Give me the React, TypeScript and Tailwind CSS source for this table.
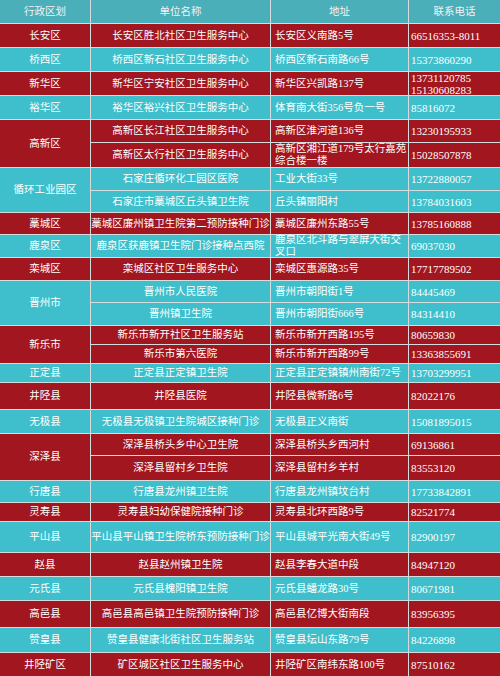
import type { ReactNode } from "react";

type Unit = { name: string; addr: ReactNode; phone: ReactNode };
type Group = { area: string; units: Unit[] };

const groups: Group[] = [
  { area: "长安区", units: [{ name: "长安区胜北社区卫生服务中心", addr: "长安区义南路5号", phone: "66516353-8011" }] },
  { area: "桥西区", units: [{ name: "桥西区新石社区卫生服务中心", addr: "桥西区新石南路66号", phone: "15373860290" }] },
  {
    area: "新华区",
    units: [{ name: "新华区宁安社区卫生服务中心", addr: "新华区兴凯路137号", phone: <>13731120785<br />15130608283</> }],
  },
  { area: "裕华区", units: [{ name: "裕华区裕兴社区卫生服务中心", addr: "体育南大街356号负一号", phone: "85816072" }] },
  {
    area: "高新区",
    units: [
      { name: "高新区长江社区卫生服务中心", addr: "高新区淮河道136号", phone: "13230195933" },
      { name: "高新区太行社区卫生服务中心", addr: <>高新区湘江道179号太行嘉苑<br />综合楼一楼</>, phone: "15028507878" },
    ],
  },
  {
    area: "循环工业园区",
    units: [
      { name: "石家庄循环化工园区医院", addr: "工业大街33号", phone: "13722880057" },
      { name: "石家庄市藁城区丘头镇卫生院", addr: "丘头镇丽阳村", phone: "13784031603" },
    ],
  },
  { area: "藁城区", units: [{ name: "藁城区廉州镇卫生院第二预防接种门诊", addr: "藁城区廉州东路55号", phone: "13785160888" }] },
  {
    area: "鹿泉区",
    units: [{ name: "鹿泉区获鹿镇卫生院门诊接种点西院", addr: <>鹿泉区北斗路与翠屏大街交<br />叉口</>, phone: "69037030" }],
  },
  { area: "栾城区", units: [{ name: "栾城区社区卫生服务中心", addr: "栾城区惠源路35号", phone: "17717789502" }] },
  {
    area: "晋州市",
    units: [
      { name: "晋州市人民医院", addr: "晋州市朝阳街1号", phone: "84445469" },
      { name: "晋州镇卫生院", addr: "晋州市朝阳街666号", phone: "84314410" },
    ],
  },
  {
    area: "新乐市",
    units: [
      { name: "新乐市新开社区卫生服务站", addr: "新乐市新开西路195号", phone: "80659830" },
      { name: "新乐市第六医院", addr: "新乐市新开西路99号", phone: "13363855691" },
    ],
  },
  { area: "正定县", units: [{ name: "正定县正定镇卫生院", addr: "正定县正定镇镇州南街72号", phone: "13703299951" }] },
  { area: "井陉县", units: [{ name: "井陉县医院", addr: "井陉县微新路6号", phone: "82022176" }] },
  { area: "无极县", units: [{ name: "无极县无极镇卫生院城区接种门诊", addr: "无极县正义南街", phone: "15081895015" }] },
  {
    area: "深泽县",
    units: [
      { name: "深泽县桥头乡中心卫生院", addr: "深泽县桥头乡西河村", phone: "69136861" },
      { name: "深泽县留村乡卫生院", addr: "深泽县留村乡羊村", phone: "83553120" },
    ],
  },
  { area: "行唐县", units: [{ name: "行唐县龙州镇卫生院", addr: "行唐县龙州镇坟台村", phone: "17733842891" }] },
  { area: "灵寿县", units: [{ name: "灵寿县妇幼保健院接种门诊", addr: "灵寿县北环西路9号", phone: "82521774" }] },
  { area: "平山县", units: [{ name: "平山县平山镇卫生院桥东预防接种门诊", addr: "平山县城平光南大街49号", phone: "82900197" }] },
  { area: "赵县", units: [{ name: "赵县赵州镇卫生院", addr: "赵县李春大道中段", phone: "84947120" }] },
  { area: "元氏县", units: [{ name: "元氏县槐阳镇卫生院", addr: "元氏县蟠龙路30号", phone: "80671981" }] },
  { area: "高邑县", units: [{ name: "高邑县高邑镇卫生院预防接种门诊", addr: "高邑县亿博大街南段", phone: "83956395" }] },
  { area: "赞皇县", units: [{ name: "赞皇县健康北街社区卫生服务站", addr: "赞皇县坛山东路79号", phone: "84226898" }] },
  { area: "井陉矿区", units: [{ name: "矿区城区社区卫生服务中心", addr: "井陉矿区南纬东路100号", phone: "87510162" }] },
];

function Cell({ red, className = "", children }: { red: boolean; className?: string; children: ReactNode }) {
  return (
    <div
      className={`flex items-center whitespace-nowrap text-white ${red ? "bg-[#a1161f]" : "bg-[#3ebfcb]"} ${className}`}
    >
      <div>{children}</div>
    </div>
  );
}

export default function App() {
  return (
    <div className="w-[500px] h-[676px] overflow-hidden bg-[#d4dcdd] font-['Liberation_Serif','Noto_Sans_CJK_SC',serif] text-[10.5px] leading-[12px]">
      <div className="grid grid-cols-[90px_179px_137px_91px] grid-rows-[23px_23px_23px_23px_23px_22px_24px_22px_21px_21px_22px_22px_21px_22px_18px_18px_18px_26px_23px_21px_24px_21px_18px_30px_23px_23px_26px_24px_23px] gap-px">
        {["行政区划", "单位名称", "地址", "联系电话"].map(h => (
          <div key={h} className="flex items-center justify-center bg-[#4aafb9] text-[#f2f2f2]">
            {h}
          </div>
        ))}
        {groups.map((g, i) => {
          const red = i % 2 === 0;
          return [
            <Cell
              key={g.area}
              red={red}
              className={`justify-center ${g.units.length === 2 ? "row-span-2" : ""}`}
            >
              {g.area}
            </Cell>,
            ...g.units.flatMap(u => [
              <Cell key={u.name + "n"} red={red} className="justify-center">
                {u.name}
              </Cell>,
              <Cell key={u.name + "a"} red={red} className="pl-1">
                {u.addr}
              </Cell>,
              <Cell key={u.name + "p"} red={red} className="pl-0.5 text-[11px]">
                {u.phone}
              </Cell>,
            ]),
          ];
        })}
      </div>
    </div>
  );
}
